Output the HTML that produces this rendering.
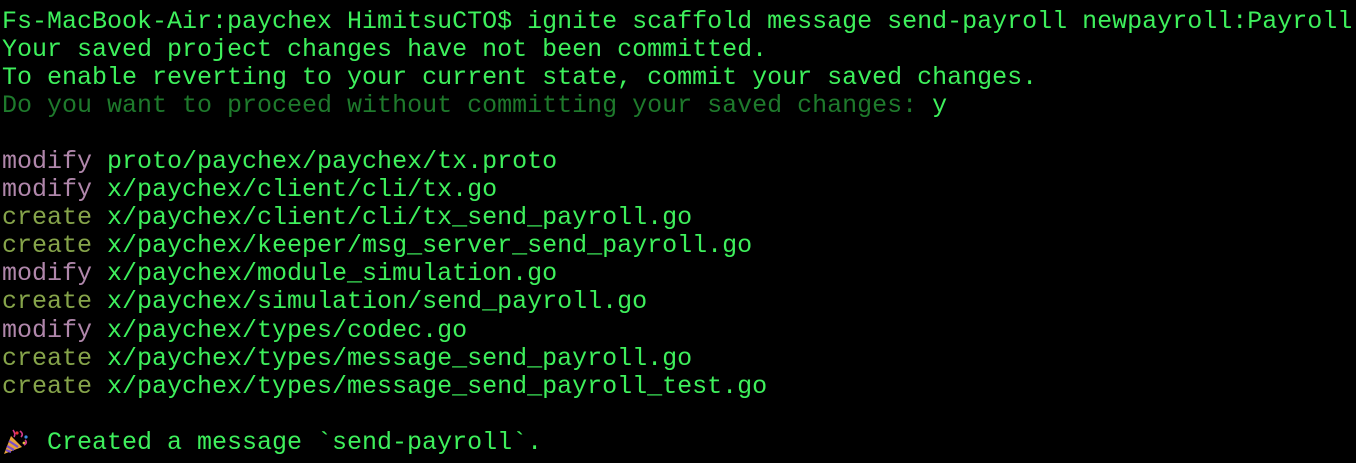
<!DOCTYPE html>
<html><head><meta charset="utf-8"><style>
html,body{margin:0;padding:0;background:#000;width:1356px;height:463px;overflow:hidden}
pre{margin:0;padding:8px 0 0 2px;font-family:"Liberation Mono","DejaVu Sans Mono",monospace;font-size:25px;line-height:28.05px;color:#3ef05c;white-space:pre}
.d{color:#1e7a2c}.y{color:#3ef05c}.m{color:#b087ab}.c{color:#86a44a}
.e{display:inline-block;width:45px;height:28px;vertical-align:top;position:relative}
</style></head><body><pre>Fs-MacBook-Air:paychex HimitsuCTO$ ignite scaffold message send-payroll newpayroll:Payroll
Your saved project changes have not been committed.
To enable reverting to your current state, commit your saved changes.
<span class="d">Do you want to proceed without committing your saved changes: </span><span class="y">y</span>

<span class="m">modify</span> proto/paychex/paychex/tx.proto
<span class="m">modify</span> x/paychex/client/cli/tx.go
<span class="c">create</span> x/paychex/client/cli/tx_send_payroll.go
<span class="c">create</span> x/paychex/keeper/msg_server_send_payroll.go
<span class="m">modify</span> x/paychex/module_simulation.go
<span class="c">create</span> x/paychex/simulation/send_payroll.go
<span class="m">modify</span> x/paychex/types/codec.go
<span class="c">create</span> x/paychex/types/message_send_payroll.go
<span class="c">create</span> x/paychex/types/message_send_payroll_test.go

<span class="e"><svg width="26" height="26" viewBox="0 0 26 26" style="position:absolute;left:1px;top:0px"><path d="M1 25 L8 7 L19 18 Z" fill="#e9a33a"/><path d="M4 17 L11 21 M3 21 L8 23 M6 12 L15 18" stroke="#7b4fc9" stroke-width="2.2"/><circle cx="14" cy="4" r="1.6" fill="#e33"/><circle cx="23" cy="8" r="1.6" fill="#3a8be3"/><circle cx="21" cy="14" r="1.4" fill="#e3c33a"/><path d="M10 1 Q13 5 11 8 M17 2 Q21 5 18 8 M22 11 Q25 14 21 16" stroke="#d33a8b" stroke-width="1.6" fill="none"/></svg></span>Created a message `send-payroll`.</pre></body></html>
